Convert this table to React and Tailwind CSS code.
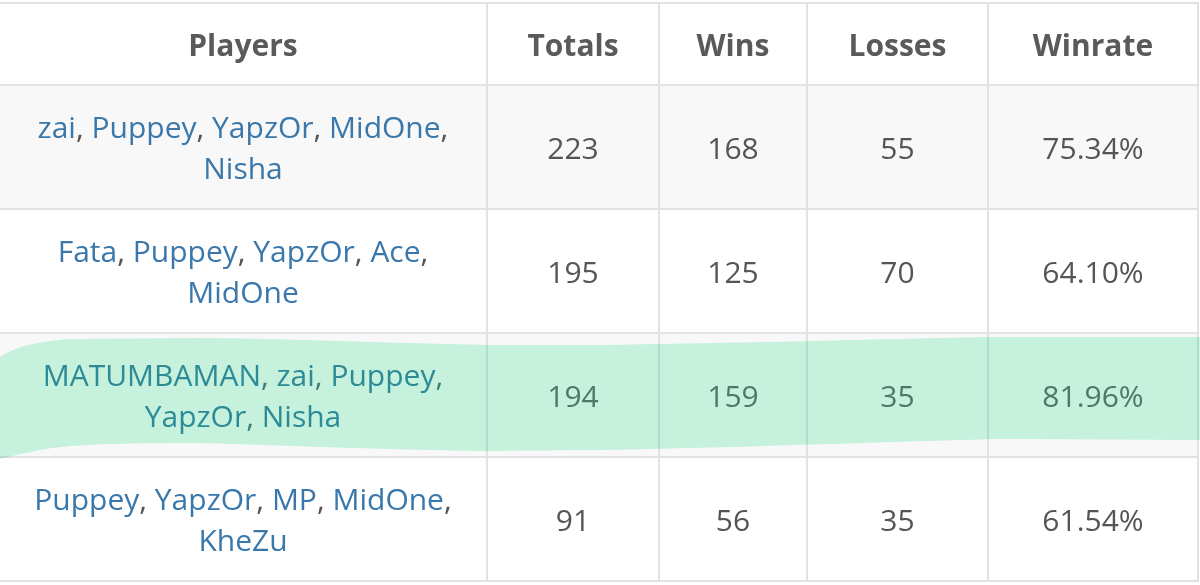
const ROWS = [
  { players: ["zai", "Puppey", "YapzOr", "MidOne", "Nisha"], totals: 223, wins: 168, losses: 55, winrate: "75.34%", striped: true },
  { players: ["Fata", "Puppey", "YapzOr", "Ace", "MidOne"], totals: 195, wins: 125, losses: 70, winrate: "64.10%" },
  { players: ["MATUMBAMAN", "zai", "Puppey", "YapzOr", "Nisha"], totals: 194, wins: 159, losses: 35, winrate: "81.96%", striped: true, marked: true },
  { players: ["Puppey", "YapzOr", "MP", "MidOne", "KheZu"], totals: 91, wins: 56, losses: 35, winrate: "61.54%" },
];

const COLS = ["w-[488px]", "w-[172px]", "w-[148px]", "w-[181px]", "w-[210px]"];

function Cell({ width, children }) {
  return (
    <div className={`${width} shrink-0 h-full flex items-center justify-center text-center px-4 border-r-2 border-[#e2e2e2]`}>
      {children}
    </div>
  );
}

// marker stroke over the third row
function Highlight() {
  return (
    <svg
      className="absolute left-0 top-[332px] w-[1200px] h-[126px] mix-blend-multiply pointer-events-none"
      viewBox="0 0 1200 126"
      preserveAspectRatio="none"
    >
      <path
        d="M0 21 C 12 13, 30 6, 70 3 L 200 2 C 300 3, 380 7, 488 9 L 600 9 C 750 7, 880 3, 990 1 L 1200 1 L 1200 104 L 1000 103 C 880 106, 720 112, 600 114 L 488 115 C 400 114, 300 110, 200 107 C 120 107, 70 108, 40 114 C 20 118, 8 121, 0 123 Z"
        fill="#cbf8e4"
      />
    </svg>
  );
}

function PlayerList({ names, marked }) {
  const link = marked ? "text-[#2c8b96]" : "text-[#3a78ab]";
  const sep = marked ? "text-[#3f7f78]" : "text-[#555]";
  return (
    <span className="relative z-10">
      {names.map((n, i) => (
        <span key={n + i}>
          <a href="#" className={link}>{n}</a>
          {i < names.length - 1 && <span className={sep}>, </span>}
        </span>
      ))}
    </span>
  );
}

export default function App() {
  return (
    <div className="w-[1200px] h-[585px] bg-white overflow-hidden font-['Open_Sans',sans-serif] text-[30px] leading-[41px]">
      <div className="relative mt-[2px] w-[1199px] border-t-2 border-[#e2e2e2]">
        <div className="flex h-[82px] border-b-2 border-[#e2e2e2] font-bold text-[#5a5a5a]">
          {["Players", "Totals", "Wins", "Losses", "Winrate"].map((h, i) => (
            <Cell key={h} width={COLS[i]}>{h}</Cell>
          ))}
        </div>
        {ROWS.map((r, idx) => {
          const num = r.marked ? "text-[#4c7a66]" : "text-[#555]";
          return (
            <div
              key={idx}
              className={`flex h-[124px] border-b-2 border-[#e2e2e2] ${r.striped ? "bg-[#f8f8f8]" : "bg-white"}`}
            >
              <Cell width={COLS[0]}>
                <PlayerList names={r.players} marked={r.marked} />
              </Cell>
              <Cell width={COLS[1]}><span className={`relative z-10 ${num}`}>{r.totals}</span></Cell>
              <Cell width={COLS[2]}><span className={`relative z-10 ${num}`}>{r.wins}</span></Cell>
              <Cell width={COLS[3]}><span className={`relative z-10 ${num}`}>{r.losses}</span></Cell>
              <Cell width={COLS[4]}><span className={`relative z-10 ${num}`}>{r.winrate}</span></Cell>
            </div>
          );
        })}
        <Highlight />
      </div>
    </div>
  );
}
